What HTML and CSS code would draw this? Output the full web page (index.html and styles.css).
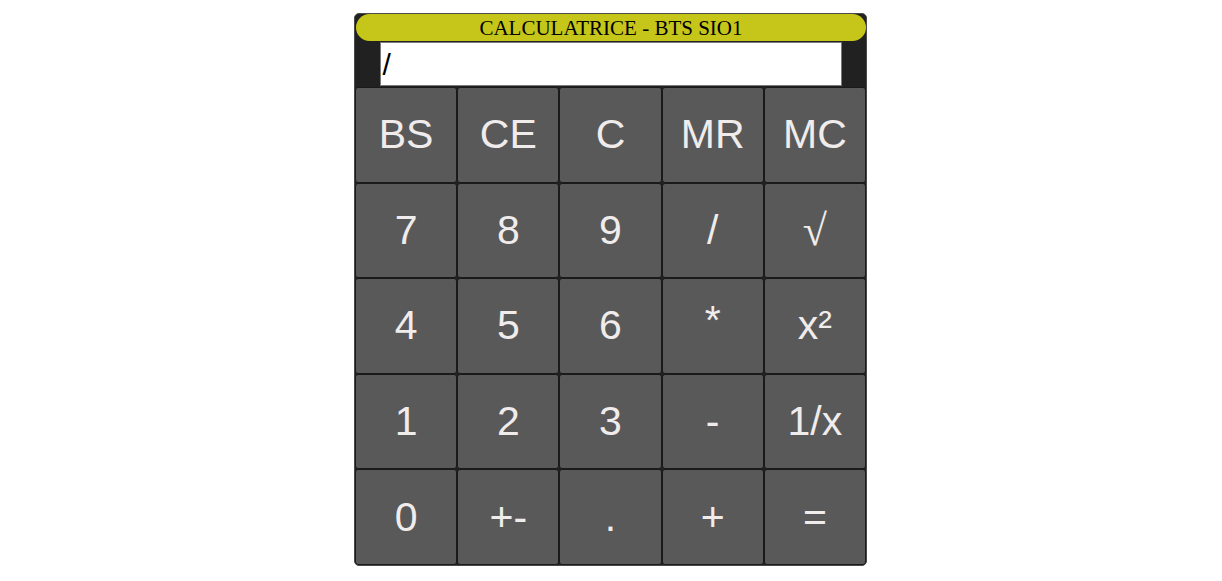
FILE: index.html
```html
<!DOCTYPE html>
<html lang="fr">
<head>
<meta charset="utf-8">
<title>Calculatrice</title>
<link rel="stylesheet" href="styles.css">
</head>
<body>
<div class="calc">
  <div class="title">CALCULATRICE - BTS SIO1</div>
  <div class="screen-row"><div class="screen">/</div></div>
  <div class="keys">
    <button class="key">BS</button>
    <button class="key">CE</button>
    <button class="key">C</button>
    <button class="key">MR</button>
    <button class="key">MC</button>
    <button class="key">7</button>
    <button class="key">8</button>
    <button class="key">9</button>
    <button class="key">/</button>
    <button class="key serif">√</button>
    <button class="key">4</button>
    <button class="key">5</button>
    <button class="key">6</button>
    <button class="key up">*</button>
    <button class="key">x²</button>
    <button class="key">1</button>
    <button class="key">2</button>
    <button class="key">3</button>
    <button class="key">-</button>
    <button class="key">1/x</button>
    <button class="key">0</button>
    <button class="key">+-</button>
    <button class="key">.</button>
    <button class="key">+</button>
    <button class="key">=</button>
  </div>
</div>
</body>
</html>
```
FILE: styles.css
```css
html, body {
  margin: 0;
  padding: 0;
  background: #ffffff;
}
body {
  padding-top: 13px;
}
.calc {
  width: 511px;
  margin: 0 0 0 354px;
  background: #212121;
  border: 1px solid #4a4a4a;
  border-radius: 5px;
  overflow: hidden;
  font-family: "Liberation Sans", Arial, sans-serif;
}
.title {
  margin: 0 0 0 1px;
  height: 27px;
  background: #c6c61a;
  border-radius: 14px;
  font-family: "Liberation Serif", "Times New Roman", serif;
  font-size: 21px;
  line-height: 28px;
  text-align: center;
  color: #000;
}
.screen-row {
  display: flex;
  justify-content: center;
  padding: 1px 0 1px 0;
}
.screen {
  width: 458px;
  height: 42px;
  background: #fff;
  border: 1px solid #7a7a7a;
  color: #000;
  font-size: 30px;
  line-height: 44px;
  padding-left: 2px;
  box-sizing: content-box;
}
.keys {
  display: grid;
  grid-template-columns: repeat(5, 1fr);
  grid-auto-rows: 95.6px;
}
.key {
  margin: 0;
  background: #595959;
  border: 1px solid #1a1a1a;
  border-radius: 3px;
  color: #f0ecec;
  font-family: "Liberation Sans", Arial, sans-serif;
  font-size: 41px;
  padding: 0;
}
.key.serif {
  font-family: "Liberation Serif", "DejaVu Serif", serif;
  font-size: 44px;
}
.key.up {
  padding-bottom: 10px;
}
```
